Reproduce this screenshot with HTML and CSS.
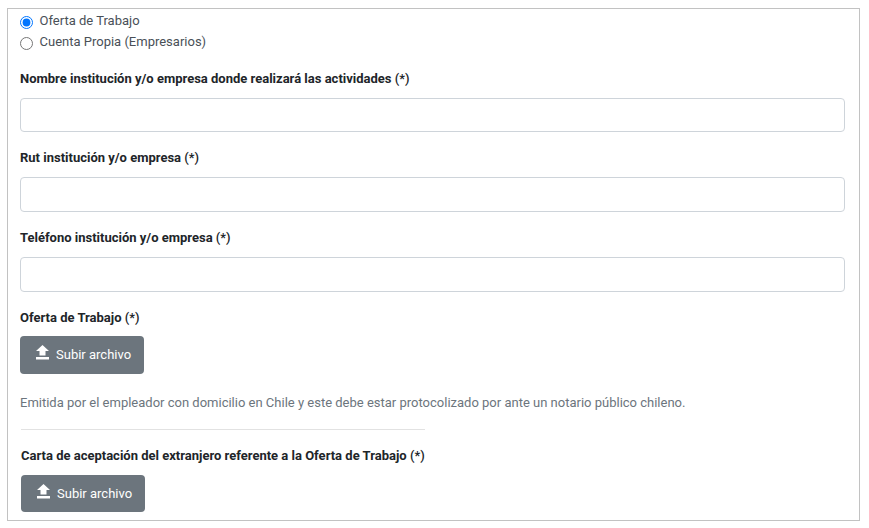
FILE: index.html
```html
<!DOCTYPE html>
<html lang="es">
  <head>
    <meta charset="UTF-8" />
    <meta name="viewport" content="width=device-width, initial-scale=1.0" />
    <title>Antecedentes laborales</title>
    <link rel="stylesheet" href="styles.css">
  </head>
  <body>
    <form class="panel">
      <div class="radio-group">
        <label class="radio-row">
          <input type="radio" name="tipo" checked />
          <span>Oferta de Trabajo</span>
        </label>
        <label class="radio-row">
          <input type="radio" name="tipo" />
          <span>Cuenta Propia (Empresarios)</span>
        </label>
      </div>

      <div class="form-group form-group-short">
        <label for="nombre">Nombre institución y/o empresa donde realizará las actividades <span class="req">(*)</span></label>
        <input type="text" id="nombre" />
      </div>
      <div class="form-group">
        <label for="rut">Rut institución y/o empresa <span class="req">(*)</span></label>
        <input type="text" id="rut" />
      </div>
      <div class="form-group">
        <label for="telefono">Teléfono institución y/o empresa <span class="req">(*)</span></label>
        <input type="text" id="telefono" />
      </div>

      <div class="upload">
        <label>Oferta de Trabajo <span class="req">(*)</span></label>
        <button type="button" class="btn-upload">
          <svg width="16" height="16" viewBox="0 0 16 16"><path d="M7.500 0 14 6h-3.500v4.500h-6V6H1zM1 12h13v2.500H1z" fill="currentColor"/></svg>
          <span>Subir archivo</span>
        </button>
        <p class="help">Emitida por el empleador con domicilio en Chile y este debe estar protocolizado por ante un notario público chileno.</p>
      </div>

      <div class="upload upload-second">
        <hr class="divider" />
        <label>Carta de aceptación del extranjero referente a la Oferta de Trabajo <span class="req">(*)</span></label>
        <button type="button" class="btn-upload btn-short">
          <svg width="16" height="16" viewBox="0 0 16 16"><path d="M7.500 0 14 6h-3.500v4.500h-6V6H1zM1 12h13v2.500H1z" fill="currentColor"/></svg>
          <span>Subir archivo</span>
        </button>
      </div>
    </form>
  </body>
</html>
```

FILE: styles.css
```css
* {
  box-sizing: border-box;
}

html,
body {
  height: 100%;
}

body {
  margin: 0;
  padding: 8px 9px 7px 7px;
  background-color: #fff;
  color: #212529;
  font-family: Roboto, Arial, sans-serif;
  font-size: 13px;
  line-height: 19.5px;
  overflow: hidden;
}

.panel {
  height: 513px;
  padding: 1px 14px 0 12px;
  border: 1px solid #c2c2c2;
  overflow: hidden;
}

.radio-group {
  margin-bottom: 17px;
}

.radio-row {
  display: flex;
  align-items: center;
  gap: 6.500px;
  height: 21px;
  color: #495057;
}

.radio-row input {
  width: 13px;
  height: 13px;
  margin: 4px 0 0;
}

.form-group {
  margin-bottom: 16px;
}

.form-group label,
.upload label {
  display: block;
  height: 19px;
  margin-bottom: 10px;
  font-weight: 700;
  color: #212529;
}

.req {
  font-weight: 500;
}

.form-group input {
  display: block;
  width: 100%;
  height: 35px;
  padding: 6px 12px;
  border: 1px solid #ced4da;
  border-radius: 4px;
}

.form-group-short input {
  height: 34px;
}

.upload label {
  margin-bottom: 9px;
}

.btn-upload {
  display: flex;
  align-items: center;
  gap: 5px;
  width: 124px;
  height: 38px;
  padding: 0 0 2px 15px;
  border: none;
  border-radius: 4px;
  background-color: #6c757d;
  color: #fff;
  font-family: inherit;
  font-size: 13px;
}

.btn-upload svg {
  margin-bottom: 2px;
}

.btn-short {
  height: 37px;
  padding-bottom: 0;
}

.btn-short svg {
  margin-bottom: 3px;
}

.help {
  margin: 19px 0 0;
  color: #6c757d;
}

.upload-second {
  padding-left: 1px;
}

.divider {
  width: 404px;
  margin: 16px 0 16px;
  border: 0;
  border-top: 1px solid #e2e2e2;
}

.upload-second label {
  margin-bottom: 10px;
}
```
